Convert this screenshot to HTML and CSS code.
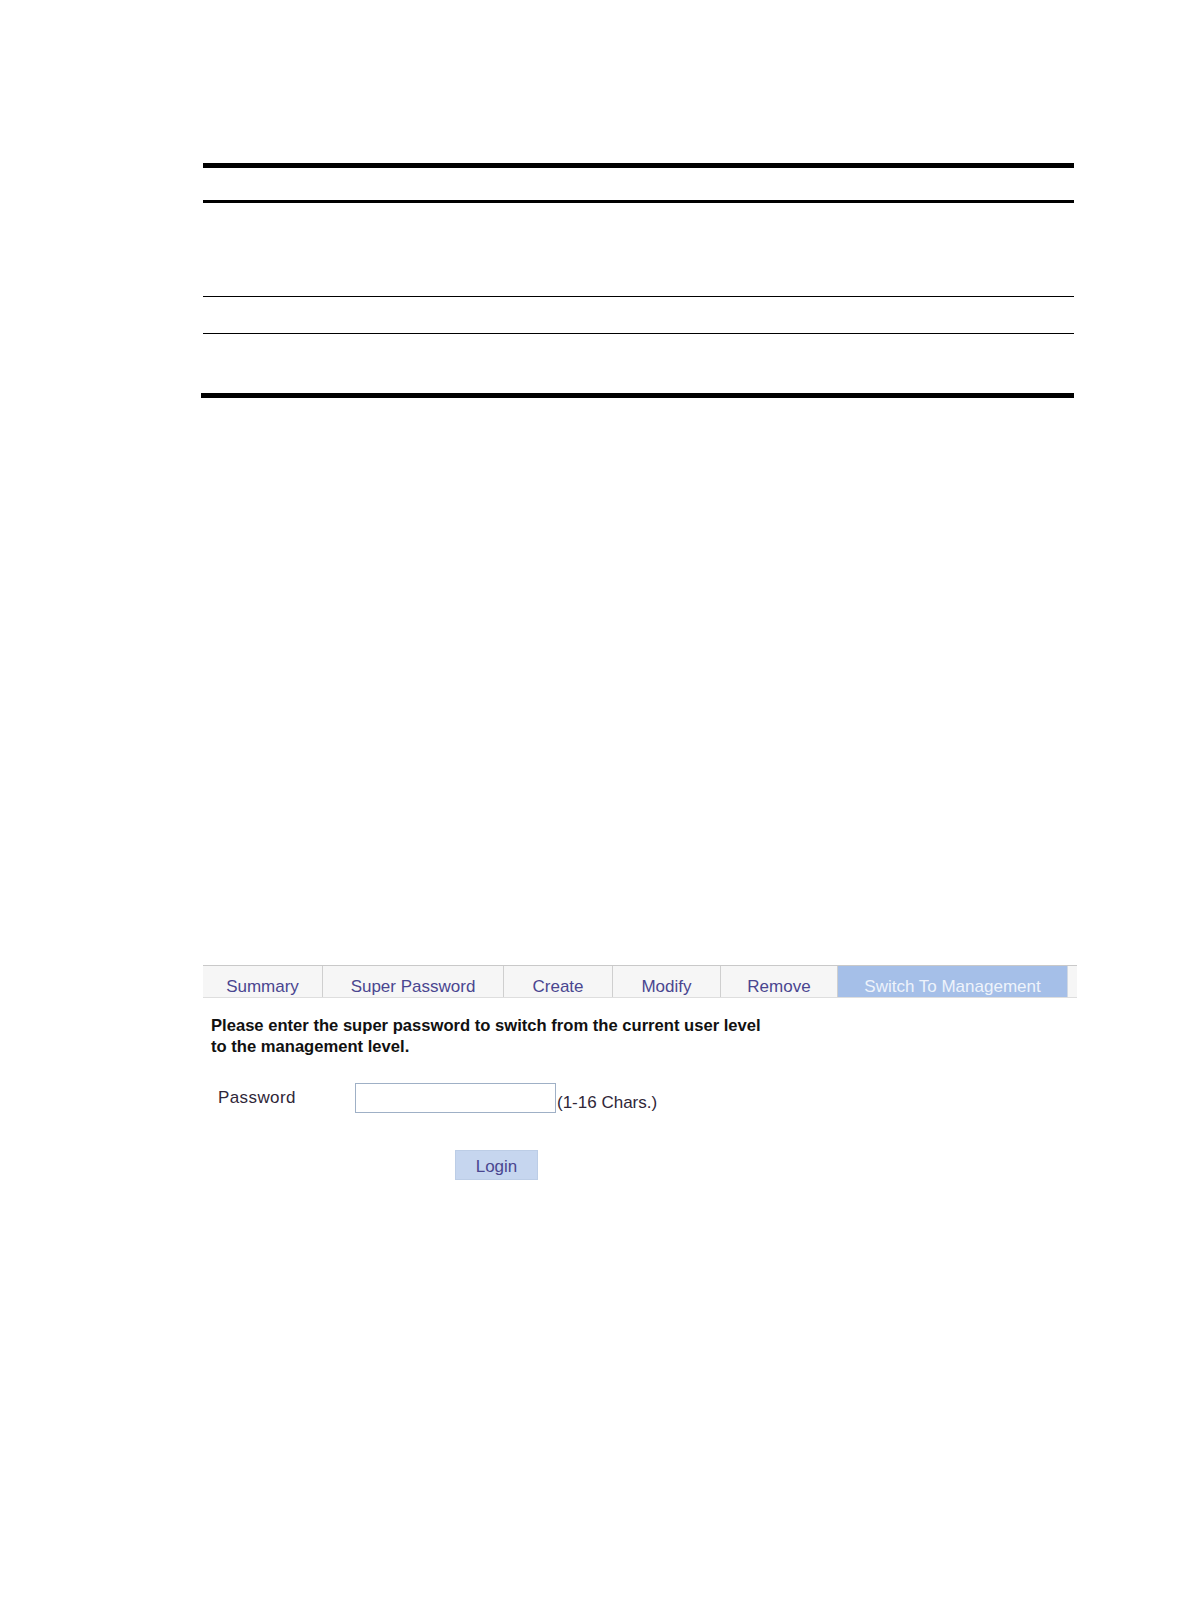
FILE: index.html
```html
<!DOCTYPE html>
<html>
<head>
<meta charset="utf-8">
<title>Switch To Management</title>
<link rel="stylesheet" href="styles.css">
</head>
<body>
<div class="page">
  <div class="rules">
    <div class="rule rule-thick"></div>
    <div class="gap gap-head"></div>
    <div class="rule rule-medium"></div>
    <div class="gap gap-tall"></div>
    <div class="rule rule-thin"></div>
    <div class="gap gap-row"></div>
    <div class="rule rule-thin"></div>
    <div class="gap gap-last"></div>
    <div class="rule rule-thick rule-end"></div>
  </div>

  <div class="panel">
    <div class="tabs">
      <div class="tab tab-summary">Summary</div>
      <div class="tab tab-super">Super Password</div>
      <div class="tab tab-create">Create</div>
      <div class="tab tab-modify">Modify</div>
      <div class="tab tab-remove">Remove</div>
      <div class="tab tab-active">Switch To Management</div>
      <div class="tab-rest"></div>
    </div>
    <p class="intro">Please enter the super password to switch from the current user level<br>to the management level.</p>
    <div class="field">
      <label class="label" for="pw">Password</label>
      <input class="input" id="pw" type="password">
      <span class="hint">(1-16 Chars.)</span>
    </div>
    <div class="actions">
      <button class="btn" type="button">Login</button>
    </div>
  </div>
</div>
</body>
</html>
```

FILE: styles.css
```css
html, body {
  margin: 0;
  padding: 0;
  background: #ffffff;
}

.page {
  width: 1190px;
  min-height: 1616px;
  padding-left: 203px;
  box-sizing: border-box;
  font-family: "Liberation Sans", Arial, sans-serif;
}

.rules {
  width: 871px;
  padding-top: 163px;
}

.rule {
  background: #000000;
}

.rule-thick {
  height: 5px;
}

.rule-medium {
  height: 3px;
}

.rule-thin {
  height: 1px;
}

.rule-end {
  margin-left: -2px;
  width: 873px;
}

.gap-head { height: 32px; }
.gap-tall { height: 93px; }
.gap-row { height: 36px; }
.gap-last { height: 59px; }

.panel {
  margin-top: 567px;
  width: 874px;
}

.tabs {
  display: flex;
  height: 31px;
  border-top: 1px solid #c9c9c9;
  border-bottom: 1px solid #dedede;
  background: #f6f6f6;
}

.tab {
  display: flex;
  align-items: center;
  justify-content: center;
  font-size: 17px;
  color: #4a4690;
  border-right: 1px solid #cfcfcf;
  padding-top: 11px;
  box-sizing: border-box;
}

.tab-summary { width: 120px; }
.tab-super { width: 181px; }
.tab-create { width: 109px; }
.tab-modify { width: 108px; }
.tab-remove { width: 117px; }

.tab-active {
  width: 229px;
  background: #a5bfe8;
  color: #eef3fb;
  border-right: none;
}

.tab-rest {
  flex: 1;
  border-left: 1px solid #d0d8e4;
}

.intro {
  margin: 17px 0 0 8px;
  font-size: 16.6px;
  line-height: 21px;
  font-weight: bold;
  color: #111111;
}

.field {
  display: flex;
  align-items: center;
  margin-top: 26px;
  padding-left: 15px;
}

.label {
  width: 137px;
  font-size: 17px;
  letter-spacing: 0.4px;
  color: #2f2638;
}

.input {
  width: 201px;
  height: 30px;
  margin: 0;
  padding: 0;
  box-sizing: border-box;
  border: 1px solid #9fb0c6;
  background: #ffffff;
}

.hint {
  align-self: flex-end;
  margin-left: 1px;
  font-size: 17px;
  color: #2f2638;
}

.actions {
  margin-top: 37px;
  padding-left: 252px;
}

.btn {
  width: 83px;
  height: 30px;
  margin: 0;
  padding: 3px 0 0;
  border: 1px solid #bccde6;
  background: #c6d6ef;
  font-family: "Liberation Sans", Arial, sans-serif;
  font-size: 17px;
  color: #4a4690;
}
```
